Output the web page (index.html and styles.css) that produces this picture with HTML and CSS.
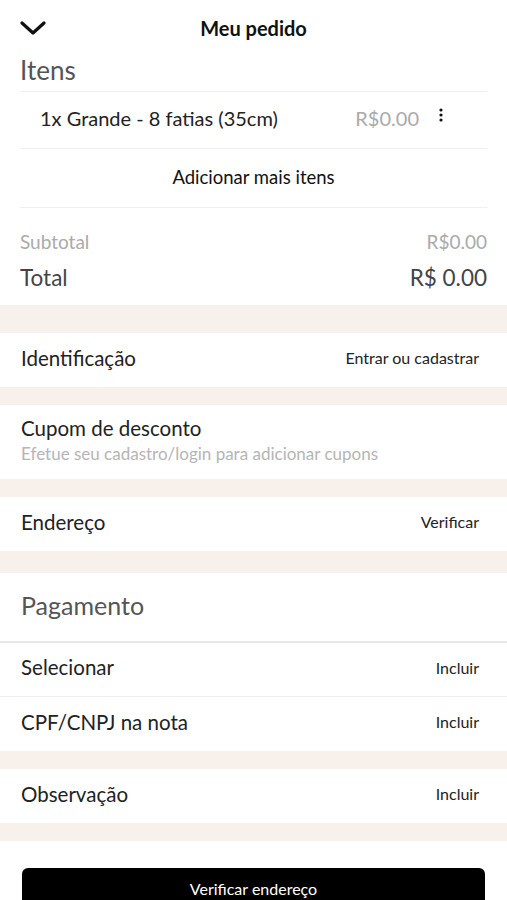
FILE: index.html
```html
<!DOCTYPE html>
<html lang="pt-BR">
<head>
<meta charset="UTF-8" />
<meta name="viewport" content="width=device-width, initial-scale=1" />
<title>Meu pedido</title>
<link rel="stylesheet" href="styles.css">
</head>
<body>

<header class="topo">
  <svg class="voltar" width="26" height="16" viewBox="0 0 26 16">
    <path d="M2 3 L13 13 L24 3" fill="none" stroke="#111" stroke-width="3.2" stroke-linecap="round" stroke-linejoin="round"/>
  </svg>
  <h1>Meu pedido</h1>
</header>

<section class="bloco itens">
  <h2 class="titulo">Itens</h2>
  <div class="item">
    <span class="item-nome">1x Grande - 8 fatias (35cm)</span>
    <span class="item-preco">R$0.00</span>
    <svg class="mais" width="4" height="14" viewBox="0 0 4 14">
      <circle cx="2" cy="2" r="1.6" fill="#111"/>
      <circle cx="2" cy="7" r="1.6" fill="#111"/>
      <circle cx="2" cy="12" r="1.6" fill="#111"/>
    </svg>
  </div>
  <div class="adicionar">Adicionar mais itens</div>
  <div class="resumo">
    <div class="linha sub"><span>Subtotal</span><span>R$0.00</span></div>
    <div class="linha total"><span>Total</span><span>R$ 0.00</span></div>
  </div>
</section>

<div class="faixa alta"></div>

<div class="opcao">
  <span class="rotulo">Identificação</span>
  <span class="acao">Entrar ou cadastrar</span>
</div>

<div class="faixa"></div>

<div class="opcao cupom">
  <div>
    <div class="rotulo">Cupom de desconto</div>
    <div class="dica">Efetue seu cadastro/login para adicionar cupons</div>
  </div>
</div>

<div class="faixa"></div>

<div class="opcao">
  <span class="rotulo">Endereço</span>
  <span class="acao">Verificar</span>
</div>

<div class="faixa media"></div>

<div class="pagamento">
  <h2 class="titulo">Pagamento</h2>
</div>

<div class="opcao linha-topo">
  <span class="rotulo">Selecionar</span>
  <span class="acao">Incluir</span>
</div>

<div class="opcao linha-fina">
  <span class="rotulo">CPF/CNPJ na nota</span>
  <span class="acao">Incluir</span>
</div>

<div class="faixa"></div>

<div class="opcao">
  <span class="rotulo">Observação</span>
  <span class="acao">Incluir</span>
</div>

<div class="faixa"></div>

<div class="rodape">
  <button type="button">Verificar endereço</button>
</div>

</body>
</html>
```

FILE: styles.css
```css
body {
  margin: 0;
  font-family: Lato, 'Open Sans', sans-serif;
  color: #222;
  background: #fff;
}

/* Cabeçalho */
.topo {
  position: relative;
  height: 56px;
  display: flex;
  align-items: center;
  justify-content: center;
}

.voltar {
  position: absolute;
  left: 20px;
  top: 20px;
}

.topo h1 {
  margin: 0;
  font-size: 20px;
  font-weight: 700;
  color: #111;
}

.titulo {
  margin: 0;
  font-weight: 400;
  color: #555;
}

/* Itens */
.itens {
  padding: 0 20px;
}

.itens .titulo {
  font-size: 26px;
  line-height: 28px;
  padding-bottom: 7px;
}

.item {
  display: flex;
  align-items: center;
  height: 56px;
  padding: 0 44px 0 20px;
  border-top: 1px solid #f0f0f0;
  border-bottom: 1px solid #f0f0f0;
  font-size: 20px;
}

.item-nome {
  flex: 1;
  color: #222;
  margin-bottom: 5px;
}

.item-preco {
  color: #aaa;
  margin-bottom: 5px;
}

.mais {
  margin-left: 20px;
  margin-bottom: 10px;
}

.adicionar {
  height: 59px;
  display: flex;
  align-items: center;
  justify-content: center;
  font-size: 18.5px;
  color: #111;
  border-bottom: 1px solid #f0f0f0;
  padding-bottom: 2px;
  box-sizing: border-box;
}

.resumo {
  padding: 21px 0 12px;
}

.linha {
  display: flex;
  justify-content: space-between;
}

.sub {
  font-size: 19px;
  color: #aaa;
  line-height: 26px;
}

.total {
  margin-top: 8px;
  font-size: 22.5px;
  color: #444;
  line-height: 30px;
}

/* Faixas de separação */
.faixa {
  height: 18px;
  background: #f8f1eb;
}

.faixa.alta {
  height: 28px;
}

.faixa.media {
  height: 22px;
}

/* Opções */
.opcao {
  display: flex;
  align-items: center;
  justify-content: space-between;
  height: 54px;
  padding: 0 28px 5px 21px;
  box-sizing: border-box;
}

.rotulo {
  font-size: 20.5px;
  color: #222;
}

.acao {
  font-size: 16px;
  color: #222;
}

.cupom {
  height: 74px;
}

.dica {
  margin-top: 3px;
  font-size: 17px;
  color: #b5b5b5;
}

.pagamento {
  height: 68px;
  display: flex;
  align-items: center;
  padding: 0 21px 5px;
  box-sizing: border-box;
}

.pagamento .titulo {
  font-size: 25px;
}

.linha-topo {
  border-top: 2px solid #e8e8e8;
  height: 55px;
}

.linha-fina {
  border-top: 1px solid #efefef;
  height: 55px;
}

/* Botão */
.rodape {
  padding: 27px 22px 20px;
}

.rodape button {
  width: 100%;
  height: 44px;
  background: #000;
  color: #fff;
  border: none;
  border-radius: 6px;
  font-family: inherit;
  font-size: 16px;
  padding: 0 0 4px;
}
```
